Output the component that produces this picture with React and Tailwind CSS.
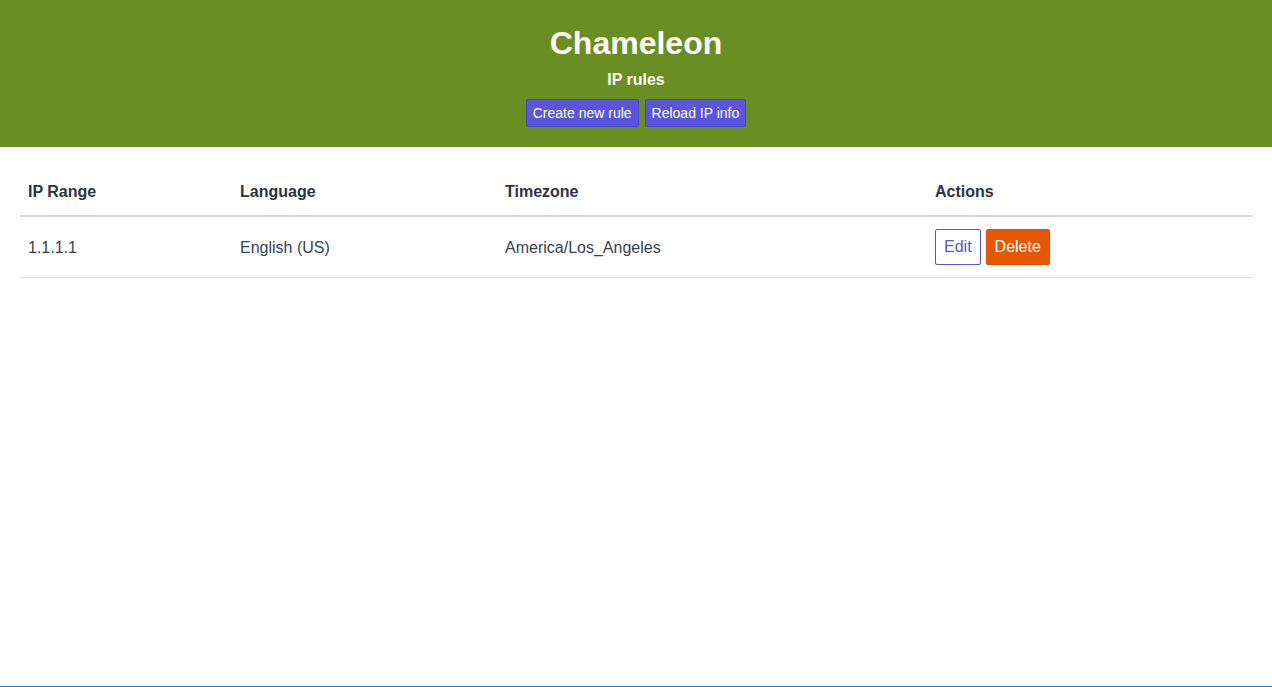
import React from 'react'

const rules = [
  { ip: '1.1.1.1', language: 'English (US)', timezone: 'America/Los_Angeles' },
]

const App = () => {
  return (
    <div className="min-h-screen bg-white border-b border-[#1a84d6] font-['Liberation_Sans',Arial,sans-serif]">
      {/* Header */}
      <header className="bg-[#6b8e23] text-white text-center pt-[25px] pb-[20px]">
        <h1 className="text-[32px] leading-[37px] font-bold">Chameleon</h1>
        <p className="mt-[9px] text-base leading-[18px] font-bold">IP rules</p>
        <div className="mt-[10px] flex justify-center gap-[6px]">
          <button className="bg-[#5a55dc] border border-[#4a45c4] text-white text-sm leading-[18px] px-[6px] py-[4px] rounded-[2px]">
            Create new rule
          </button>
          <button className="bg-[#5a55dc] border border-[#4a45c4] text-white text-sm leading-[18px] px-[6px] py-[4px] rounded-[2px]">
            Reload IP info
          </button>
        </div>
      </header>

      {/* Rules table */}
      <main className="pl-5 pr-[19px] pt-5">
        <table className="w-full border-collapse text-left text-[#374151]">
          <thead>
            <tr className="border-b-2 border-[#d8dade]">
              <th className="w-[212px] px-2 pt-[13px] pb-[11px] leading-6 font-bold text-[#2d3340]">IP Range</th>
              <th className="w-[265px] px-2 pt-[13px] pb-[11px] leading-6 font-bold text-[#2d3340]">Language</th>
              <th className="w-[430px] px-2 pt-[13px] pb-[11px] leading-6 font-bold text-[#2d3340]">Timezone</th>
              <th className="px-2 pt-[13px] pb-[11px] leading-6 font-bold text-[#2d3340]">Actions</th>
            </tr>
          </thead>
          <tbody>
            {rules.map((rule, i) => (
              <tr key={i} className="border-b border-[#e2e4e8]">
                <td className="px-2 pt-[13px] pb-[11px] align-middle">{rule.ip}</td>
                <td className="px-2 pt-[13px] pb-[11px] align-middle">{rule.language}</td>
                <td className="px-2 pt-[13px] pb-[11px] align-middle">{rule.timezone}</td>
                <td className="px-2 py-3 align-middle">
                  <div className="flex gap-[5px]">
                    <button className="h-9 px-2 border border-[#5a55dc] text-[#5a55dc] bg-white text-base rounded-[2px]">
                      Edit
                    </button>
                    <button className="h-9 px-2 border border-[#e05000] bg-[#e65800] text-white text-base rounded-[2px]">
                      Delete
                    </button>
                  </div>
                </td>
              </tr>
            ))}
          </tbody>
        </table>
      </main>
    </div>
  )
}

export default App
